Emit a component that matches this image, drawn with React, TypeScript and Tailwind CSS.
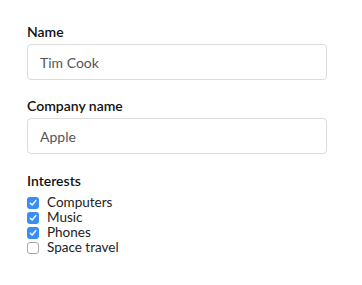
import React from "react";

const Check = ({ checked, label }: { checked: boolean; label: string }) => (
  <label className="flex items-center h-[15px]">
    {checked ? (
      <span className="w-[12px] h-[12px] rounded-[3px] bg-[#3a8cf6] flex items-center justify-center">
        <svg width="8" height="8" viewBox="0 0 8 8">
          <path d="M1.3 4.2 L3.2 6 L6.8 1.6" stroke="white" strokeWidth="1.5" fill="none" strokeLinecap="round" strokeLinejoin="round" />
        </svg>
      </span>
    ) : (
      <span className="w-[12px] h-[12px] rounded-[3px] bg-white border border-[#a8a8a8]" />
    )}
    <span className="ml-[8px] text-[13.5px] leading-[15px] text-[#222]">{label}</span>
  </label>
);

export default function App() {
  return (
    <div className="w-[362px] h-[285px] bg-white px-[27px] pt-[22px]" style={{ fontFamily: "Lato, 'Noto Sans', sans-serif" }}>
      <div className="w-[300px]">
        <div className="text-[14px] leading-[20px] font-semibold text-[#111]">Name</div>
        <div className="mt-[2px] h-[36px] border border-[#dcdcdc] rounded-[4px] flex items-center px-[12px] text-[14px] text-[#555]">Tim Cook</div>
        <div className="mt-[16px] text-[14px] leading-[20px] font-semibold text-[#111]">Company name</div>
        <div className="mt-[2px] h-[36px] border border-[#dcdcdc] rounded-[4px] flex items-center px-[12px] text-[14px] text-[#555]">Apple</div>
        <div className="mt-[17px] text-[14px] leading-[20px] font-semibold text-[#111]">Interests</div>
        <div className="mt-[4px] flex flex-col">
          <Check checked label="Computers" />
          <Check checked label="Music" />
          <Check checked label="Phones" />
          <Check checked={false} label="Space travel" />
        </div>
      </div>
    </div>
  );
}
